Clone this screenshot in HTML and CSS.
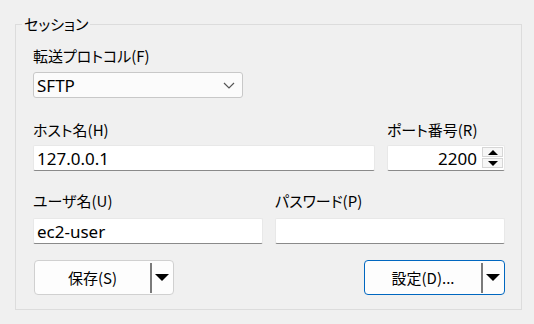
FILE: index.html
```html
<!DOCTYPE html>
<html lang="ja">
<head>
    <meta charset="UTF-8">
    <meta name="viewport" content="width=device-width, initial-scale=1.0">
    <title>セッション</title>
    <link rel="stylesheet" href="styles.css">
</head>
<body>
    <fieldset class="session">
        <legend>セッション</legend>

        <div class="field">
            <label class="label" for="protocol">転送プロトコル(F)</label>
            <div class="combo" id="protocol">
                <span>SFTP</span>
                <svg class="chevron" width="12" height="7" viewBox="0 0 12 7">
                    <path d="M1 1 L6 6 L11 1" fill="none" stroke="#555" stroke-width="1.2"/>
                </svg>
            </div>
        </div>

        <div class="row row-host">
            <div class="field">
                <label class="label" for="host">ホスト名(H)</label>
                <input class="text" id="host" type="text" value="127.0.0.1">
            </div>
            <div class="field">
                <label class="label" for="port">ポート番号(R)</label>
                <div class="spin">
                    <input class="text num" id="port" type="text" value="2200">
                    <div class="spin-btns">
                        <span class="spin-btn"><i class="tri up"></i></span>
                        <span class="spin-btn"><i class="tri"></i></span>
                    </div>
                </div>
            </div>
        </div>

        <div class="row row-user">
            <div class="field">
                <label class="label" for="user">ユーザ名(U)</label>
                <input class="text" id="user" type="text" value="ec2-user">
            </div>
            <div class="field">
                <label class="label" for="pass">パスワード(P)</label>
                <input class="text" id="pass" type="password" value="">
            </div>
        </div>

        <div class="buttons">
            <button class="split">
                <span class="caption">保存(S)</span>
                <span class="sep"></span>
                <i class="tri"></i>
            </button>
            <button class="split default">
                <span class="caption">設定(D)...</span>
                <span class="sep"></span>
                <i class="tri"></i>
            </button>
        </div>
    </fieldset>
</body>
</html>
```

FILE: styles.css
```css
body {
    margin: 0;
    background: #f0f0f0;
    font-family: "Noto Sans CJK JP", "Noto Sans", sans-serif;
    font-feature-settings: "palt";
    font-size: 15px;
    color: #000;
}
.session {
    box-sizing: border-box;
    width: 507px;
    height: 296px;
    margin: 14px 0 0 15px;
    padding: 12px 16px 14px 17px;
    border: 1px solid #dcdcdc;
}
.session legend {
    margin-left: -11px;
    padding: 0 2px;
    line-height: 20px;
}
.field {
    display: flex;
    flex-direction: column;
}
.label {
    line-height: 20px;
    margin-bottom: 6px;
}
.combo {
    box-sizing: border-box;
    width: 210px;
    height: 26px;
    border: 1px solid #c8c8c8;
    border-radius: 3px;
    background: #fbfbfb;
    display: flex;
    align-items: center;
    justify-content: space-between;
    padding: 0 7px 0 3px;
    font-family: "Noto Sans", sans-serif;
    font-size: 17px;
}
.row {
    display: grid;
    gap: 12px;
}
.row-host {
    margin-top: 22px;
    grid-template-columns: 342px 118px;
}
.row-host .label {
    margin-bottom: 5px;
}
.row-user {
    margin-top: 20px;
    grid-template-columns: 230px 230px;
}
.row-user .label {
    margin-bottom: 7px;
}
.text {
    box-sizing: border-box;
    width: 100%;
    height: 26px;
    margin: 0;
    border: 1px solid #e8e8e8;
    border-bottom-color: #8a8a8a;
    border-radius: 2px;
    background: #fff;
    padding: 0 3px;
    font-family: "Noto Sans", sans-serif;
    font-size: 17px;
    color: #000;
    outline: none;
}
.spin {
    position: relative;
}
.num {
    text-align: right;
    padding-right: 27px;
}
.spin-btns {
    position: absolute;
    right: 2px;
    top: 2px;
    display: flex;
    flex-direction: column;
    gap: 1px;
}
.spin-btn {
    box-sizing: border-box;
    width: 21px;
    height: 10px;
    border: 1px solid #d6d6d6;
    background: #f6f6f6;
    display: flex;
    align-items: center;
    justify-content: center;
}
.tri {
    width: 0;
    height: 0;
    border-left: 5px solid transparent;
    border-right: 5px solid transparent;
    border-top: 5px solid #000;
}
.tri.up {
    border-top: none;
    border-bottom: 5px solid #000;
}
.buttons {
    margin-top: 16px;
    display: flex;
    justify-content: space-between;
    padding-left: 1px;
}
.split {
    box-sizing: border-box;
    width: 140px;
    height: 35px;
    display: flex;
    align-items: center;
    padding: 0 4px 0 0;
    border: 1px solid #d0d0d0;
    border-radius: 4px;
    background: #fdfdfd;
    font-family: "Noto Sans CJK JP", "Noto Sans", sans-serif;
    font-feature-settings: "palt";
    font-size: 15px;
    color: #000;
}
.split.default {
    width: 141px;
    border-color: #0067c0;
}
.split .caption {
    flex: 1;
    text-align: center;
}
.split .sep {
    width: 2px;
    height: 30px;
    background: #7a7a7a;
    margin-right: 3px;
}
.split .tri {
    border-left-width: 7px;
    border-right-width: 7px;
    border-top-width: 7px;
}
```
